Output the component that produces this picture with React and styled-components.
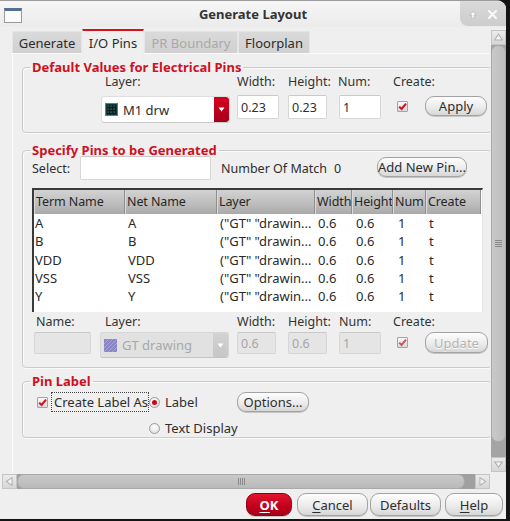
import React from 'react';
import styled, { createGlobalStyle } from 'styled-components';

const Global = createGlobalStyle`
  html, body { margin: 0; padding: 0; background: #141414; }
  body { font-family: "Noto Sans", "Open Sans", sans-serif; font-size: 12.5px; color: #2e2e2e; }
  #root { width: 510px; height: 521px; }
  * { box-sizing: border-box; }
`;

const Window = styled.div`
  width: 506px;
  height: 519px;
  background: #efefef;
  border-top: 1px solid #9c9c9c;
  border-top-right-radius: 9px;
  overflow: hidden;
  display: flex;
  flex-direction: column;
`;

const TitleBar = styled.div`
  height: 26px;
  display: grid;
  grid-template-columns: 1fr auto 1fr;
  align-items: center;
  background: linear-gradient(#f6f6f6, #ebebeb);
`;

const WinIcon = styled.div`
  width: 18px;
  height: 15px;
  margin-left: 4px;
  margin-top: 2px;
  background: #fbfbfb;
  border: 1px solid #9a9a9a;
  border-top: 3px solid #55708f;
`;

const Title = styled.div`
  font-weight: 700;
  font-size: 13px;
  color: #333;
`;

const WinControls = styled.div`
  justify-self: end;
  align-self: start;
  width: 46px;
  height: 25px;
  background: linear-gradient(#d9d9d9, #cdcdcd);
  border-bottom-left-radius: 8px;
  display: flex;
  align-items: center;
  justify-content: space-evenly;
  padding-top: 2px;
`;

const Body = styled.div`
  display: grid;
  grid-template-columns: 488px 15px;
  grid-template-rows: 444px 15px;
  column-gap: 1px;
  row-gap: 1px;
  padding: 2px 0 0 2px;
`;

const Viewport = styled.div`
  overflow: hidden;
  padding-left: 10px;
`;

const TabBar = styled.div`
  display: flex;
  align-items: flex-end;
  height: 24px;
`;

const Tab = styled.div`
  width: ${p => p.$w}px;
  height: ${p => (p.$active ? 25 : 22)}px;
  margin-bottom: ${p => (p.$active ? -1 : 0)}px;
  position: relative;
  z-index: ${p => (p.$active ? 1 : 0)};
  display: flex;
  align-items: center;
  justify-content: center;
  padding-top: ${p => (p.$active ? 1 : 0)}px;
  background: ${p => (p.$active ? '#efefef' : 'linear-gradient(#dadada, #d0d0d0)')};
  border: 1px solid ${p => (p.$active ? '#ececec' : '#e6e6e6')};
  border-top: ${p => (p.$active ? '2px solid #d8101c' : '1px solid #e4e4e4')};
  border-bottom: none;
  color: ${p => (p.$disabled ? '#a9a9a9' : '#2b2b2b')};
  font-size: 13px;
  white-space: nowrap;
`;

const Pane = styled.div`
  width: 492px;
  height: 420px;
  border-top: 1px solid #fbfbfb;
  border-left: 1px solid #fbfbfb;
  padding-top: 6px;
`;

const Group = styled.fieldset`
  margin: ${p => p.$mt}px 0 0 9px;
  width: 470px;
  border: 1px solid #cbcbcb;
  border-radius: 4px;
  box-shadow: inset 1px 1px 0 #fafafa, 1px 1px 0 #fafafa;
  padding: 0 0 ${p => p.$pb}px 0;
  min-width: 0;
`;

const Legend = styled.legend`
  margin-left: 7px;
  padding: 0 2px;
  color: #d0101e;
  font-weight: 700;
  font-size: 13px;
  line-height: 14px;
`;

const FieldGrid = styled.div`
  display: grid;
  grid-template-columns: ${p => p.$first}px ${p => p.$second}px 51px 51px 54px 32px 63px;
  grid-template-rows: 14px auto;
  row-gap: ${p => p.$gap}px;
  align-items: start;
  margin-top: ${p => p.$mt}px;
`;

const FieldLabel = styled.div`
  line-height: 14px;
  margin-left: ${p => p.$ml || 0}px;
  white-space: nowrap;
  color: #333;
`;

const TextInput = styled.input`
  width: ${p => p.$w}px;
  height: ${p => p.$h || 24}px;
  margin-left: ${p => p.$ml || 0}px;
  margin-top: ${p => p.$mt || 0}px;
  border: 1px solid #d6d6d6;
  border-top-color: #c9c9c9;
  border-radius: 2px;
  background: ${p => (p.disabled ? '#e5e5e5' : '#fff')};
  color: ${p => (p.disabled ? '#a6a6a6' : '#2e2e2e')};
  font: inherit;
  font-size: 12.5px;
  padding: 0 3px;
  outline: none;
`;

const Combo = styled.div`
  width: 129px;
  height: ${p => p.$h}px;
  margin-top: ${p => p.$mt || 0}px;
  display: flex;
  align-items: stretch;
  border-radius: 3px;
  background: ${p => (p.$disabled ? '#e1e1e1' : '#fff')};
  border: 1px solid ${p => (p.$disabled ? '#d6d6d6' : '#dedede')};
  border-bottom-color: ${p => (p.$disabled ? '#c4c4c4' : '#c8c8c8')};
  overflow: hidden;
`;

const ComboValue = styled.div`
  flex: 1;
  display: flex;
  align-items: center;
  gap: 5px;
  padding-left: 3px;
  font-size: 13px;
  color: ${p => (p.$disabled ? '#a8a8a8' : '#2b2b2b')};
`;

const ComboArrow = styled.div`
  width: 15px;
  display: flex;
  align-items: center;
  justify-content: center;
  background: ${p => (p.$disabled ? 'linear-gradient(#d3d3d3, #c6c6c6)' : 'linear-gradient(#d6001e, #a6001a)')};
  border-radius: 0 3px 3px 0;
`;

const CheckWrap = styled.div`
  width: 11px;
  height: 11px;
  margin-left: ${p => p.$ml || 0}px;
  margin-top: ${p => p.$mt || 0}px;
  border: 1px solid #a4a4a4;
  border-radius: 1px;
  background: linear-gradient(#f8f8f8, #d9d9d9);
  display: flex;
  align-items: center;
  justify-content: center;
  flex-shrink: 0;
`;

const PillButton = styled.button`
  width: ${p => p.$w}px;
  height: ${p => p.$h || 20}px;
  margin-top: ${p => p.$mt || 0}px;
  margin-left: ${p => p.$ml || 0}px;
  margin-right: ${p => p.$mr || 0}px;
  border: 1px solid #a2a2a2;
  border-radius: 9px;
  background: linear-gradient(#fdfdfd, #ececec 55%, #d7d7d7);
  box-shadow: 0 1px 0 #c6c6c6;
  font: inherit;
  font-size: 13px;
  color: ${p => (p.disabled ? '#b4b4b4' : '#2e2e2e')};
  text-shadow: ${p => (p.disabled ? '0 1px 0 #fff' : 'none')};
  padding: 0;
  white-space: nowrap;
`;

const PrimaryButton = styled(PillButton)`
  background: linear-gradient(#e3132c, #c2001c 60%, #a80018);
  border-color: #8c0014;
  color: #fff;
  font-weight: 700;
`;

const U = styled.span`
  text-decoration: underline;
  text-underline-offset: 2px;
`;

const SelectRow = styled.div`
  display: flex;
  align-items: center;
  height: 24px;
  margin-top: -1px;
  padding-left: 9px;
`;

const RowLabel = styled.div`
  width: ${p => p.$w}px;
  margin-left: ${p => p.$ml || 0}px;
  white-space: nowrap;
  overflow: hidden;
  flex-shrink: 0;
`;

const Table = styled.div`
  margin: 8px 0 0 9px;
  width: 451px;
  height: 124px;
  border-top: 2px solid #3a3a3a;
  border-left: 2px solid #3a3a3a;
  border-right: 1px solid #e6e6e6;
  background: #fff;
`;

const TableGrid = styled.div`
  display: grid;
  grid-template-columns: 91px 92px 98px 37px 41px 33px 55px;
  grid-auto-rows: 18.3px;
  grid-template-rows: 24px;
`;

const HeadCell = styled.div`
  height: 24px;
  display: flex;
  align-items: center;
  padding-left: 1px;
  padding-bottom: 1px;
  background: linear-gradient(#d2d2d2, #bcbcbc 60%, #a9a9a9);
  border-right: 1px solid #8e8e8e;
  border-left: 1px solid #dadada;
  color: #262626;
  font-size: 12.5px;
  letter-spacing: -0.1px;
  white-space: nowrap;
  overflow: hidden;
`;

const Cell = styled.div`
  line-height: 18px;
  padding-left: ${p => p.$pl}px;
  white-space: nowrap;
  overflow: hidden;
  color: #2a2a2a;
  font-size: 13px;
`;

const LabelGrid = styled.div`
  display: grid;
  grid-template-columns: 28px 98px 88px 72px;
  grid-template-rows: 20px 18px;
  row-gap: 7px;
  align-items: center;
  margin-top: 4px;
`;

const FocusLabel = styled.div`
  height: 20px;
  display: flex;
  align-items: center;
  padding-left: 2px;
  border: 1px dotted #444;
  white-space: nowrap;
  font-size: 13px;
`;

const RadioRow = styled.div`
  display: flex;
  align-items: center;
  gap: 5px;
  white-space: nowrap;
  font-size: 13px;
  grid-column: ${p => p.$col};
`;

const RadioDot = styled.div`
  width: 11px;
  height: 11px;
  border-radius: 50%;
  border: 1px solid #9c9c9c;
  background: radial-gradient(circle at 50% 35%, #ffffff, #dcdcdc);
  display: flex;
  align-items: center;
  justify-content: center;
  &::after {
    content: '';
    width: 5px;
    height: 5px;
    border-radius: 50%;
    background: ${p => (p.$on ? '#d2001c' : 'transparent')};
  }
`;

const VScroll = styled.div`
  margin-top: 1px;
  height: 442px;
  display: flex;
  flex-direction: column;
  background: #a4a4a4;
`;

const HScroll = styled.div`
  display: flex;
  background: #a0a0a0;
`;

const ArrowBtn = styled.div`
  width: 15px;
  height: 15px;
  flex-shrink: 0;
  display: flex;
  align-items: center;
  justify-content: center;
  background: linear-gradient(#ececec, #d6d6d6);
  border: 1px solid #c4c4c4;
`;

const Thumb = styled.div`
  ${p => (p.$vertical ? 'height' : 'width')}: ${p => p.$len}px;
  ${p => (p.$vertical ? 'width' : 'height')}: 15px;
  flex-shrink: 0;
  background: ${p => (p.$vertical ? 'linear-gradient(90deg, #c9c9c9, #bdbdbd)' : 'linear-gradient(#c9c9c9, #b9b9b9)')};
  border: 1px solid #a9a9a9;
  border-radius: 7px;
  display: flex;
  align-items: center;
  justify-content: center;
`;

const Spacer = styled.div`
  flex: 1;
`;

const Corner = styled.div`
  background: #efefef;
`;

const ButtonRow = styled.div`
  display: flex;
  justify-content: flex-end;
  padding: 4px 3px 0 0;
`;

const Check = ({ ml, mt, dim }) => (
  <CheckWrap $ml={ml} $mt={mt}>
    <svg width="9" height="9" viewBox="0 0 9 9">
      <path d="M1.2 4.6 L3.6 7 L8 1.6" fill="none" stroke={dim ? '#c55a66' : '#d3101f'} strokeWidth="2" />
    </svg>
  </CheckWrap>
);

const Tri = ({ dir, color = '#fff', stroke = 'none', size = 7 }) => {
  const pts = {
    down: '0.5,1.5 6.5,1.5 3.5,5.5',
    up: '0.5,5.5 6.5,5.5 3.5,1',
    left: '5.5,0.5 5.5,6.5 1,3.5',
    right: '1.5,0.5 1.5,6.5 6,3.5',
  }[dir];
  return (
    <svg width={size} height={size} viewBox="0 0 7 7">
      <polygon points={pts} fill={color} stroke={stroke} strokeWidth="0.8" />
    </svg>
  );
};

const Grip = ({ vertical }) => (
  <svg width={vertical ? 7 : 9} height={vertical ? 9 : 7} viewBox={vertical ? '0 0 7 9' : '0 0 9 7'}>
    {[0, 1, 2, 3].map(i =>
      vertical ? (
        <line key={i} x1="0" x2="7" y1={1.5 + i * 2} y2={1.5 + i * 2} stroke="#8a8a8a" strokeWidth="1" />
      ) : (
        <line key={i} y1="0" y2="7" x1={1.5 + i * 2} x2={1.5 + i * 2} stroke="#8a8a8a" strokeWidth="1" />
      )
    )}
  </svg>
);

const LayerSwatch = () => (
  <svg width="13" height="13" viewBox="0 0 13 13">
    <rect x="0.5" y="0.5" width="12" height="12" fill="#0c1f1f" stroke="#1c9a9a" strokeWidth="1.4" />
    {[3, 6, 9].map(x => [3, 6, 9].map(y => <rect key={`${x}-${y}`} x={x - 0.8} y={y - 0.8} width="1.8" height="1.8" fill="#2a4a4a" />))}
  </svg>
);

const HatchSwatch = () => (
  <svg width="13" height="13" viewBox="0 0 13 13">
    <rect x="0" y="0" width="13" height="13" fill="#8a86c4" />
    {[-8, -4, 0, 4, 8, 12].map(o => (
      <line key={o} x1={o} y1="13" x2={o + 13} y2="0" stroke="#a8a4d8" strokeWidth="1" />
    ))}
  </svg>
);

const rows = ['A', 'B', 'VDD', 'VSS', 'Y'];
const heads = ['Term Name', 'Net Name', 'Layer', 'Width', 'Height', 'Num', 'Create'];

export default function App() {
  return (
    <>
      <Global />
      <Window>
        <TitleBar>
          <WinIcon />
          <Title>Generate Layout</Title>
          <WinControls>
            <svg width="10" height="10" viewBox="0 0 10 10">
              <path d="M5 1.5 L1.8 5 H3.8 V8.5 H6.2 V5 H8.2 Z" fill="#fafafa" stroke="#b0b0b0" strokeWidth="0.6" />
            </svg>
            <svg width="11" height="11" viewBox="0 0 11 11">
              <path d="M2 2 L9 9 M9 2 L2 9" stroke="#fafafa" strokeWidth="2" strokeLinecap="round" />
            </svg>
          </WinControls>
        </TitleBar>

        <Body>
          <Viewport>
            <TabBar>
              <Tab $w={70}>Generate</Tab>
              <Tab $w={62} $active>I/O Pins</Tab>
              <Tab $w={94} $disabled>PR Boundary</Tab>
              <Tab $w={72}>Floorplan</Tab>
            </TabBar>
            <Pane>
              <Group $mt={0} $pb={9}>
                <Legend>Default Values for Electrical Pins</Legend>
                <FieldGrid $first={78} $second={136} $gap={7} $mt={1}>
                  <div />
                  <FieldLabel $ml={4}>Layer:</FieldLabel>
                  <FieldLabel>Width:</FieldLabel>
                  <FieldLabel>Height:</FieldLabel>
                  <FieldLabel $ml={-1}>Num:</FieldLabel>
                  <FieldLabel>Create:</FieldLabel>
                  <div />

                  <div />
                  <Combo $h={27} $mt={0}>
                    <ComboValue>
                      <LayerSwatch />
                      M1 drw
                    </ComboValue>
                    <ComboArrow>
                      <Tri dir="down" />
                    </ComboArrow>
                  </Combo>
                  <TextInput $w={42} $mt={-1} readOnly value="0.23" />
                  <TextInput $w={39} $mt={-1} readOnly value="0.23" />
                  <TextInput $w={42} $mt={-1} readOnly value="1" />
                  <Check ml={4} mt={5} />
                  <PillButton $w={62}>Apply</PillButton>
                </FieldGrid>
              </Group>

              <Group $mt={10} $pb={9}>
                <Legend>Specify Pins to be Generated</Legend>
                <SelectRow>
                  <RowLabel $w={48}>Select:</RowLabel>
                  <TextInput $w={131} readOnly value="" />
                  <RowLabel $w={106} $ml={10}>Number Of Match</RowLabel>
                  <RowLabel $w={10} $ml={7}>0</RowLabel>
                  <PillButton $w={90} $ml={33} $mt={-3}>Add New Pin...</PillButton>
                </SelectRow>
                <Table>
                  <TableGrid>
                    {heads.map(h => (
                      <HeadCell key={h}>{h}</HeadCell>
                    ))}
                    {rows.map(r => (
                      <React.Fragment key={r}>
                        <Cell $pl={1}>{r}</Cell>
                        <Cell $pl={3}>{r}</Cell>
                        <Cell $pl={3}>("GT" "drawin...</Cell>
                        <Cell $pl={3}>0.6</Cell>
                        <Cell $pl={4}>0.6</Cell>
                        <Cell $pl={5}>1</Cell>
                        <Cell $pl={3}>t</Cell>
                      </React.Fragment>
                    ))}
                  </TableGrid>
                </Table>
                <FieldGrid $first={77} $second={137} $gap={3} $mt={3}>
                  <FieldLabel $ml={13}>Name:</FieldLabel>
                  <FieldLabel $ml={5}>Layer:</FieldLabel>
                  <FieldLabel>Width:</FieldLabel>
                  <FieldLabel>Height:</FieldLabel>
                  <FieldLabel>Num:</FieldLabel>
                  <FieldLabel>Create:</FieldLabel>
                  <div />

                  <TextInput $w={57} $h={22} $ml={11} disabled value="" />
                  <Combo $h={26} $disabled>
                    <ComboValue $disabled>
                      <HatchSwatch />
                      GT drawing
                    </ComboValue>
                    <ComboArrow $disabled>
                      <Tri dir="down" />
                    </ComboArrow>
                  </Combo>
                  <TextInput $w={39} $h={22} disabled value="0.6" />
                  <TextInput $w={39} $h={22} disabled value="0.6" />
                  <TextInput $w={42} $h={22} disabled value="1" />
                  <Check ml={4} mt={5} dim />
                  <PillButton $w={63} $h={21} disabled>Update</PillButton>
                </FieldGrid>
              </Group>

              <Group $mt={6} $pb={0}>
                <Legend>Pin Label</Legend>
                <LabelGrid>
                  <Check ml={14} mt={0} />
                  <FocusLabel>Create Label As</FocusLabel>
                  <RadioRow>
                    <RadioDot $on />
                    Label
                  </RadioRow>
                  <PillButton $w={72}>Options...</PillButton>
                  <RadioRow $col="3 / 5">
                    <RadioDot />
                    Text Display
                  </RadioRow>
                </LabelGrid>
              </Group>
            </Pane>
          </Viewport>

          <VScroll>
            <ArrowBtn>
              <Tri dir="up" color="#f4f4f4" stroke="#b0b0b0" size={9} />
            </ArrowBtn>
            <Thumb $vertical $len={397}>
              <Grip vertical />
            </Thumb>
            <Spacer />
            <ArrowBtn>
              <Tri dir="down" color="#f4f4f4" stroke="#b0b0b0" size={9} />
            </ArrowBtn>
          </VScroll>

          <HScroll>
            <ArrowBtn>
              <Tri dir="left" color="#f4f4f4" stroke="#b0b0b0" size={9} />
            </ArrowBtn>
            <Thumb $len={448}>
              <Grip />
            </Thumb>
            <Spacer />
            <ArrowBtn>
              <Tri dir="right" color="#f4f4f4" stroke="#b0b0b0" size={9} />
            </ArrowBtn>
          </HScroll>
          <Corner />
        </Body>

        <ButtonRow>
          <PrimaryButton $w={46} $h={23} $mr={5}>
            <U>O</U>K
          </PrimaryButton>
          <PillButton $w={71} $h={23} $mr={2}>
            <U>C</U>ancel
          </PillButton>
          <PillButton $w={71} $h={23} $mr={4}>Defaults</PillButton>
          <PillButton $w={58} $h={23}>
            <U>H</U>elp
          </PillButton>
        </ButtonRow>
      </Window>
    </>
  );
}
